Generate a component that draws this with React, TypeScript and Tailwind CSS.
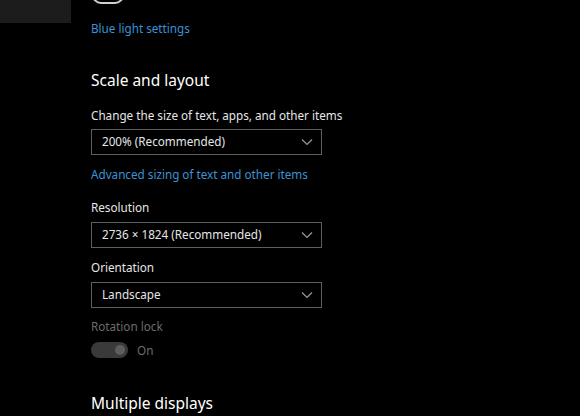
import React from "react";

function Chevron() {
  return (
    <svg width="12" height="8" viewBox="0 0 12 8" className="shrink-0">
      <path d="M1 1.5 L6 6.5 L11 1.5" fill="none" stroke="#9a9a9a" strokeWidth="1.2" />
    </svg>
  );
}

function Select({ value }: { value: string }) {
  return (
    <div className="flex h-[26px] w-[231px] items-center justify-between border border-[#5e5e5e] pl-[10px] pr-[8px] text-[11.7px] text-[#e6e6e6]">
      <span>{value}</span>
      <Chevron />
    </div>
  );
}

export default function App() {
  return (
    <div
      className="relative h-[416px] w-[580px] overflow-hidden bg-black"
      style={{ fontFamily: '"Noto Sans", "Open Sans", sans-serif' }}
    >
      <div className="absolute left-0 top-0 h-[23px] w-[71px] bg-[#1c1c1c]" />
      <div className="absolute left-[92px] top-[-14px] h-[18px] w-[32px] rounded-[9px] border-2 border-[#d0d0d0]" />
      <div className="flex flex-col pl-[91px]">
        <div className="mt-[19px] text-[11.7px] leading-[18px] text-[#3a93d6]">Blue light settings</div>
        <div className="mt-[31px] text-[15.5px] leading-[24px] text-white">Scale and layout</div>
        <div className="mt-[14px] text-[11.7px] leading-[18px] text-[#e6e6e6]">
          Change the size of text, apps, and other items
        </div>
        <div className="mt-[5px]">
          <Select value="200% (Recommended)" />
        </div>
        <div className="mt-[10px] text-[11.7px] leading-[18px] text-[#3a93d6]">
          Advanced sizing of text and other items
        </div>
        <div className="mt-[15px] text-[11.7px] leading-[18px] text-[#e6e6e6]">Resolution</div>
        <div className="mt-[6px]">
          <Select value="2736 × 1824 (Recommended)" />
        </div>
        <div className="mt-[10px] text-[11.7px] leading-[18px] text-[#e6e6e6]">Orientation</div>
        <div className="mt-[6px]">
          <Select value="Landscape" />
        </div>
        <div className="mt-[9px] text-[11.7px] leading-[18px] text-[#6b6b6b]">Rotation lock</div>
        <div className="mt-[6px] flex items-center gap-[9px]">
          <div className="flex h-[16px] w-[37px] items-center justify-end rounded-full bg-[#3a3a3a] pr-[3px]">
            <div className="h-[10px] w-[10px] rounded-full bg-[#5e5e5e]" />
          </div>
          <span className="text-[11.7px] leading-[18px] text-[#6b6b6b]">On</span>
        </div>
        <div className="mt-[32px] text-[15.5px] leading-[24px] text-white">Multiple displays</div>
      </div>
    </div>
  );
}
